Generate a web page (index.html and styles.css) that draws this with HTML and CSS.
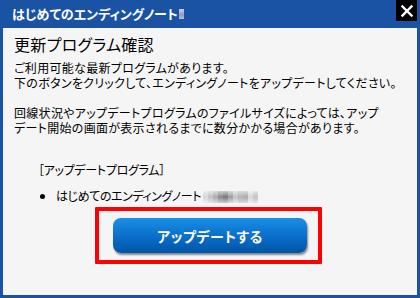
FILE: index.html
```html
<!DOCTYPE html>
<html lang="ja">
<head>
<meta charset="utf-8">
<link rel="stylesheet" href="styles.css">
</head>
<body>
<div class="window">
  <div class="titlebar">
    <span class="title">はじめてのエンディングノート</span><span class="title-blur"></span>
    <button class="close" aria-label="閉じる">
      <svg width="20" height="20" viewBox="0 0 20 20"><path d="M5.5 5.5 L14.5 14.5 M14.5 5.5 L5.5 14.5" stroke="#fff" stroke-width="2.4" stroke-linecap="square"/></svg>
    </button>
  </div>
  <div class="content">
    <h1 class="heading">更新プログラム確認</h1>
    <p class="msg">ご利用可能な最新プログラムがあります。<br>下のボタンをクリックして、エンディングノートをアップデートしてください。<br><br>回線状況やアップデートプログラムのファイルサイズによっては、アップ<br>デート開始の画面が表示されるまでに数分かかる場合があります。</p>
    <p class="label">［アップデートプログラム］</p>
    <ul class="list">
      <li>はじめてのエンディングノート<span class="blur"><i class="b1"></i><i class="b2"></i><i class="b3"></i><i class="b4"></i><i class="b5"></i><i class="b6"></i><i class="b2"></i><i class="b7"></i><i class="b3"></i><i class="b1"></i><i class="b2"></i></span></li>
    </ul>
    <div class="highlight">
      <button class="update">アップデートする</button>
    </div>
  </div>
</div>
</body>
</html>
```
FILE: styles.css
```css
html, body {
  margin: 0;
  padding: 0;
}
body {
  width: 420px;
  height: 298px;
  overflow: hidden;
  font-family: "Noto Sans CJK JP", "Noto Sans", sans-serif;
  font-feature-settings: "palt";
}
.window {
  width: 420px;
  height: 298px;
  background: #1a52a4;
  display: flex;
  flex-direction: column;
  box-sizing: border-box;
  padding: 0 3px 3px 3px;
}
.titlebar {
  height: 28px;
  display: flex;
  align-items: flex-start;
  position: relative;
}
.title {
  color: #fff;
  font-weight: bold;
  font-size: 13px;
  line-height: 14px;
  margin: 7px 0 0 9px;
}
.title-blur {
  display: inline-block;
  width: 5px;
  height: 10px;
  margin: 9px 0 0 1px;
  background: linear-gradient(#c8d0e4, #8e9cc4 60%, #b4bfdc);
}
.close {
  position: absolute;
  right: 0;
  top: 0;
  width: 21px;
  height: 21px;
  padding: 0;
  border: 0;
  background: #000;
  display: flex;
  align-items: center;
  justify-content: center;
}
.content {
  flex: 1;
  background: #f5f5f5;
  padding: 8px 11px 0 11px;
}
.heading {
  margin: 0;
  font-size: 16px;
  line-height: 17px;
  font-weight: normal;
  color: #000;
  letter-spacing: 0.3px;
}
.msg {
  margin: 7px 0 0 0;
  font-size: 12px;
  line-height: 15px;
  color: #000;
  letter-spacing: 0.3px;
}
.label {
  margin: 27px 0 0 24px;
  font-size: 12px;
  line-height: 15px;
  color: #000;
  letter-spacing: -0.3px;
}
.list {
  margin: 11px 0 0 0;
  padding: 0 0 0 42px;
  font-size: 12px;
  line-height: 15px;
  color: #000;
  letter-spacing: -0.4px;
}
.list li {
  list-style: disc;
}
.blur {
  display: inline-flex;
  vertical-align: -2px;
  height: 12px;
  margin-left: 2px;
}
.blur i {
  display: block;
  width: 5px;
  height: 12px;
}
.b1 { background: linear-gradient(#eee, #d6d6d6, #eee); }
.b2 { background: linear-gradient(#e6e6e6, #c2c2c2, #e6e6e6); }
.b3 { background: linear-gradient(#ddd, #aaa, #ddd); }
.b4 { background: linear-gradient(#d0d0d0, #8a8a8a, #d0d0d0); }
.b5 { background: linear-gradient(#ccc, #777, #ccc); }
.b6 { background: linear-gradient(#ddd, #9c9c9c, #ddd); }
.b7 { background: linear-gradient(#d8d8d8, #b4b4b4, #d8d8d8); }
.highlight {
  box-sizing: border-box;
  width: 227px;
  height: 57px;
  margin: 4px 0 0 81px;
  border: 4px solid #ff0000;
  border-radius: 1px;
  padding: 7px 11px 7px 14px;
}
.update {
  display: block;
  width: 194px;
  height: 35px;
  border: 0;
  border-radius: 8px;
  background: linear-gradient(#1a8fe6, #0a6dc8 55%, #0054a6);
  box-shadow: 1px 2px 2px rgba(0, 0, 0, 0.45);
  color: #fff;
  font-family: "Noto Sans CJK JP", "Noto Sans", sans-serif;
  font-feature-settings: "palt";
  font-size: 14px;
  font-weight: bold;
  letter-spacing: 0.5px;
  padding: 0;
}
```
